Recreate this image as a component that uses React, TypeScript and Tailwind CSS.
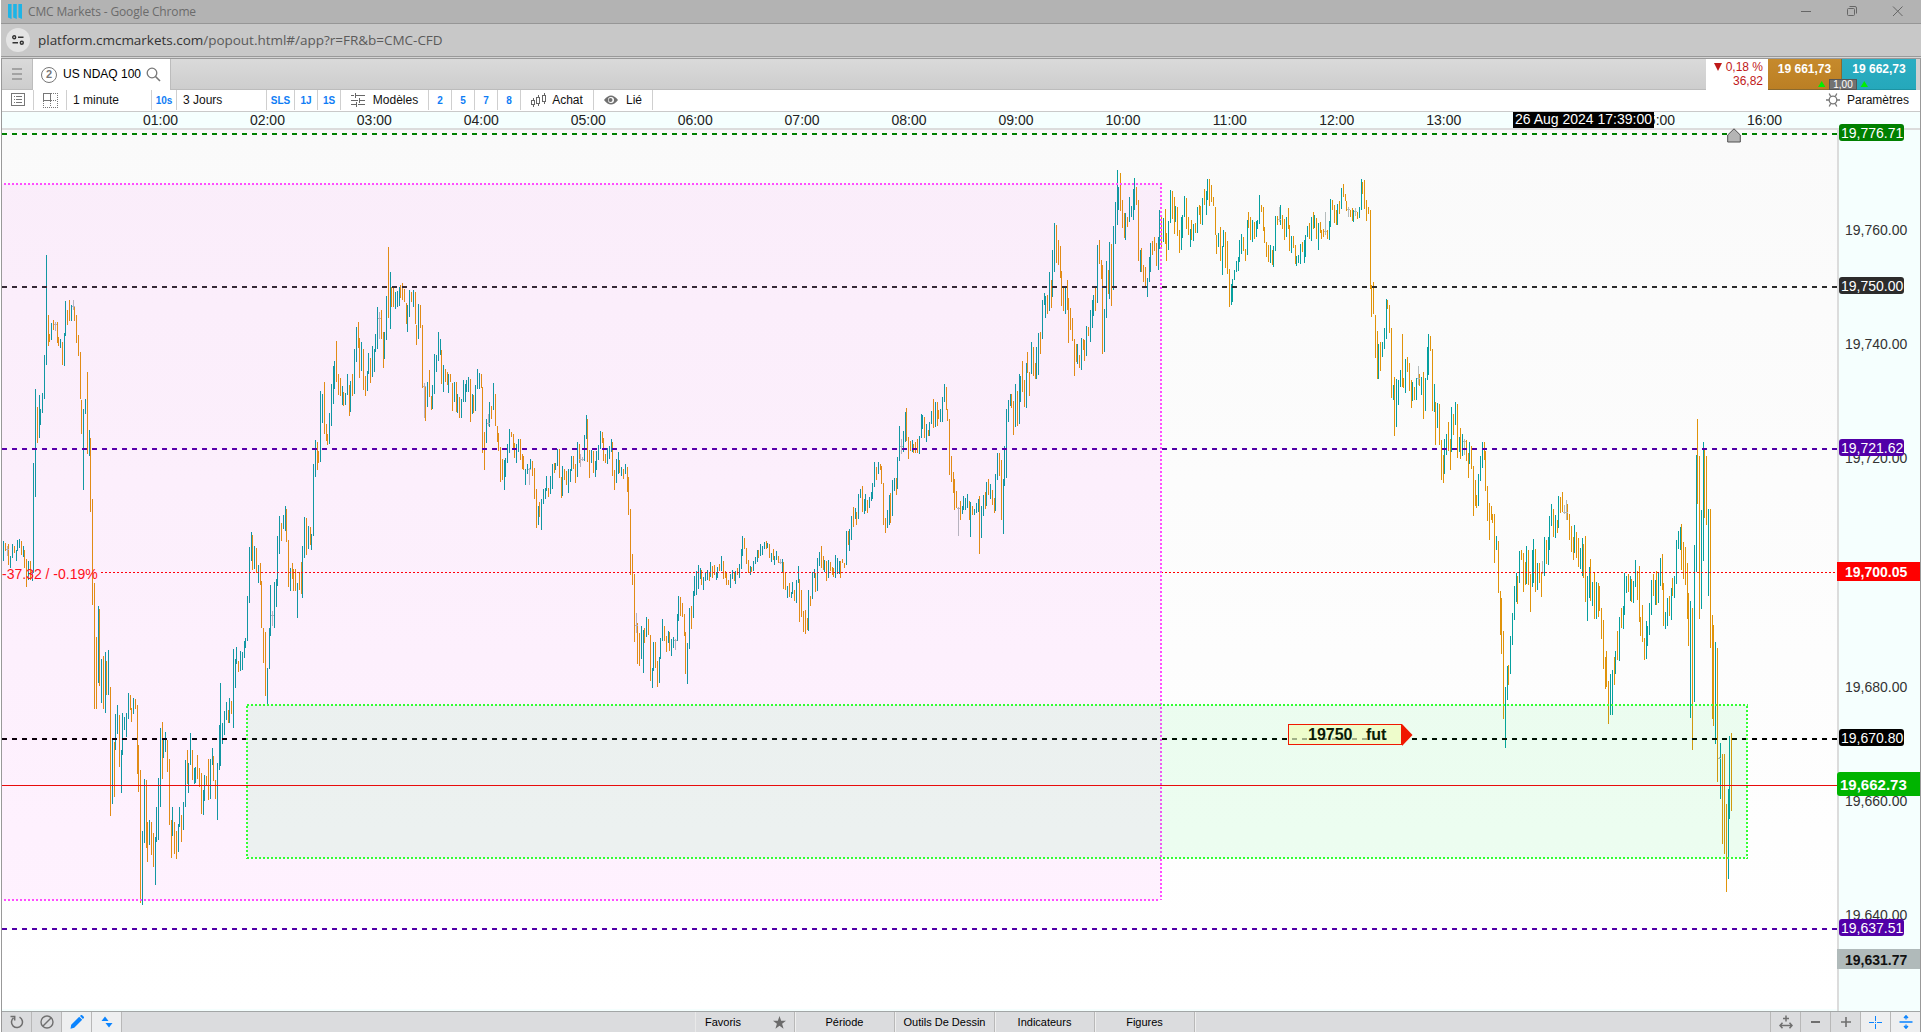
import React from "react";

/* Price bars. Every segment has an origin; bars are "colour x,top,bottom[,tick]"
   in thirds of a pixel relative to it (t = up, o = down, g = unchanged). */
type Segment = { x: number; y: number; bars: string };

const SEGMENTS: Segment[] = [
  {
    x: 0,
    y: 230,
    bars:
      "t10,933,993 o16,938,963 g22,948,978,958 o25,942,1005 t31,978,1014 t37,942,984 o43,948,969 t49,960,993 t52,930,963 t58,927,954 o64,933,975 t70,948,981 o73,960,1014 o79,987,1071 t85,993,1050 o91,993,1050 t97,1020,1053 t100,699,1029 t106,477,801 o112,531,639 t118,495,624 t121,537,585 t127,489,549 t133,375,507 t139,75,405 o145,255,348 o148,312,336 t154,279,330 o160,270,300 g166,276,303,283 o172,276,339 o175,321,348 t181,327,354 o187,336,405 t193,309,408 t196,213,318 o202,240,285 o208,210,273 t214,225,273 g220,210,240,228 o223,228,273 o229,255,339 o235,315,378 o241,366,507 o244,510,612 t250,537,780 t256,507,552 o262,426,672 t268,600,678 o271,624,846 o277,807,1125 " +
      "t838,858,972 o844,879,933 t850,855,897 t856,828,903 o859,837,936 o865,930,1071 t871,1014,1083 o877,999,1047 o880,1017,1083 o886,1017,1083 t892,1059,1164 o898,1026,1080 o904,996,1092 t907,948,1104 t913,861,984 o919,864,975 t925,888,957 o931,891,945 t934,912,960 t940,702,918 t946,630,741 o952,636,720 o955,663,699 t961,483,696 t967,492,579 o973,456,612 o979,582,633 o982,612,645 t988,549,642 t994,462,588 t1000,408,522 t1003,393,477 o1009,333,456 o1015,432,495 o1021,444,498 t1027,468,525 o1030,486,528 t1036,489,525 t1042,432,495 o1048,465,558 t1051,453,546 o1057,432,498 t1063,357,492 t1069,291,396 o1075,276,354 o1078,324,444 t1084,336,423 o1090,357,480 o1096,438,498 t1102,423,483 t1105,369,432 o1111,384,459 t1117,348,441 t1123,357,426 t1126,312,366 t1132,231,357 g1138,246,327,265 o1144,240,327 o1150,306,414 t1153,306,387 t1159,198,330 o1165,51,264 t1171,126,297 o1174,171,231 o1180,174,231 t1186,186,237 t1192,183,231 t1198,171,228 o1201,165,204 o1207,159,210 o1213,177,216 o1219,219,282 t1222,225,306 t1228,180,261 o1234,186,216 t1240,180,231 o1246,186,282 o1249,285,345 t1255,222,327 o1261,225,294 o1267,285,474 g1273,459,564,469 o1276,471,573 t1282,456,531 o1288,420,501 o1294,498,540 t1297,465,537 t1303,372,492 t1309,375,426 t1315,306,393 t1321,327,375 o1324,360,462 t1330,405,486 o1336,417,456 o1342,426,465 t1345,432,489 o1351,432,456 o1357,459,543 t1363,456,516 o1369,456,546 t1372,492,549 o1378,501,564 t1384,507,564 t1390,450,516 t1396,462,516 t1399,450,486 t1405,441,486 o1411,447,576 t1417,492,552 o1420,495,549 t1426,465,543 t1432,417,477 t1438,429,477",
  },
  {
    x: 0,
    y: 560,
    bars: "o283,69,447 o289,231,447 t295,138,369 o298,147,378 t304,297,429 o310,288,447 t316,276,459 o319,303,405 t325,270,405 o331,381,768 t337,540,732 o343,546,711 t346,462,570 t352,435,522 o358,465,621 t364,570,699 t367,459,585 t373,471,510 t379,459,531 t385,399,477 o391,405,450 o394,444,486 t400,414,462 o406,417,447 o412,435,642 o415,555,696 o421,630,1029 t427,813,1035 t433,657,849 o439,660,864 o442,786,906 t448,780,855 o454,786,885 o460,819,921 t466,831,975 t469,741,846 t475,654,840 t481,504,741 o487,486,657 t490,537,594 t496,516,576 o502,540,636 o508,597,795 o514,780,894 t517,741,828 o523,786,882 o529,813,897 t535,792,876 t538,741,801 o544,765,846 t550,726,810 t556,600,741 o562,570,672 t565,609,699 t571,519,615 o577,570,660 t583,624,672 t586,621,669 o592,585,657 o598,624,681 o604,639,762 t610,690,765 t613,645,723 o619,648,675 o625,597,720 t631,597,717 t637,564,615 o640,588,663 o646,660,717 t652,609,780 t658,495,630 t661,369,618 t667,489,552 t673,453,525 t679,426,480 o685,450,489 t688,414,489 o694,423,462 t700,267,504 t706,297,384 t709,261,312 o715,303,336 t721,273,333 t727,276,330 t733,243,294 t736,234,264 t742,108,243 t748,-39,129 t754,-84,3 o757,-75,30 t763,-42,27 o769,-36,39 t775,15,69 o781,9,75 o784,63,204 o790,204,309 o796,216,408 t802,324,435 t808,204,327 t811,75,228 g817,153,198,166 t823,66,204 t829,57,141 t832,-72,78",
  },
  {
    x: 480,
    y: 370,
    bars: "o4,12,54 o7,51,249 o13,186,300 t19,147,219 g25,132,168,160 t28,96,171 o34,108,147 t40,39,120 o46,72,168 o52,168,216 o55,189,243 o61,231,336 o67,267,330 t73,270,360 t76,264,321 t82,222,279 t88,177,249 o94,186,201 o100,192,240 o103,219,264 t109,222,279 t115,207,246 o121,207,270 o127,252,297 o130,258,300 t136,297,345 t142,282,312 g148,294,345,298 t151,267,300 o157,273,318 o163,294,387 o169,357,474 t175,408,465 o178,396,441 t184,387,480 t190,357,402 t196,354,387 t199,318,363 o205,354,381 t211,318,372 t217,282,357 o223,279,309 t226,279,300 t232,237,288 o238,237,324 o244,321,384 t247,288,378 o253,297,330 o259,303,345 t265,297,369 t271,297,336 t274,258,303 o280,258,297 o286,282,339 t292,216,321 o298,222,279 g301,252,291,267 g307,261,273,267 t313,195,273 t319,135,207 o322,147,276 o328,240,324 t334,240,279 o340,243,309 t346,273,321 t349,243,300 t355,225,270 t361,183,237 o367,186,219 o370,204,273 o376,252,279 t382,234,282 t388,228,267 t394,207,246 o397,216,318 o403,300,360 t409,267,339 t415,246,312 o418,270,309 t424,291,318 o430,297,327 t436,282,312 o442,291,366 o445,321,435 o451,417,615 o457,552,645 o463,612,816 g469,729,789,766 o472,759,882 o478,789,888 t484,768,867 t490,780,909 o493,774,819 t499,741,801 o505,747,795 o511,795,933 t517,894,954 t520,816,903 o526,816,894 o532,873,951 t538,861,939 t541,804,867 t547,747,813 o553,768,813 o559,798,846 t565,783,819 o568,786,843 t574,807,858 t580,801,834 g586,807,840,811 t592,732,813 t595,678,753 o601,681,738 o607,699,741 o613,732,798 o616,786,912 t622,819,942 t628,714,837 o634,708,777 t640,663,744 t643,618,678 t649,603,675 t655,585,657 t661,594,627 o664,600,645 t670,621,660 t676,606,633 t682,600,630 o688,606,633 t691,576,621 o697,588,624 o703,585,615 t709,606,630 t712,591,624 o718,582,603 t724,558,603 o730,573,627 o736,603,624 o739,609,645 o745,630,645 t751,612,654 t757,600,627 o763,609,633 t766,603,642 o772,594,615 t778,582,624 t784,537,597 t787,498,558 o793,504,537 o799,534,582 o805,570,609 t811,588,615 o814,591,606 t820,573,603 t826,561,582 t832,540,576 o835,540,564 t841,522,558 t847,528,555 t853,516,537 o859,513,537 t862,519,534 o868,522,564 t874,549,576 o880,537,570 t883,558,585 t889,543,570 o895,558,579 g901,567,582,577 t907,567,606 o910,576,657 o916,606,660 t922,648,684 o928,639,681 t934,666,684 t937,636,672 o943,660,693 t949,630,699 t955,588,639 o958,627,756 o964,660,741 o970,723,786 o976,720,792 o982,744,780 t985,660,783 o991,678,708 t997,606,687 t1003,597,624 o1006,609,666 t1012,564,663 t1018,546,588 o1024,528,594 o1030,558,600 t1033,570,606 o1039,573,633 t1045,570,624 o1051,576,603 o1057,591,615 o1060,594,621 t1066,555,624 t1072,564,612 t1078,573,612 o1081,573,624 o1087,567,579 o1093,579,594 t1099,483,585 o1105,483,525 t1108,477,543 t1114,438,510 o1120,411,471 t1126,414,447 o1129,426,465 t1135,372,447 t1141,357,384 o1147,348,426 t1153,387,432 t1156,372,423 o1162,390,429 t1168,381,414 t1174,366,393 t1177,339,387 t1183,276,351 o1189,291,330 t1195,276,312 o1201,282,300 o1204,288,342 o1210,339,465 o1216,444,489 t1222,420,474 t1228,375,465 o1231,369,459 t1237,330,438 t1243,324,363 o1249,324,375 t1252,261,357 t1258,168,273 g1264,207,252,230 t1270,183,246 t1276,126,216 o1279,114,213 o1285,201,267 o1291,213,243 t1297,210,246 o1300,222,249 o1306,216,249 o1312,207,249 t1318,198,252 t1324,132,204 t1327,135,177 o1333,141,204 t1339,162,216 o1345,180,198 t1348,156,198 t1354,123,162 o1360,87,174 t1366,96,171 o1372,96,168 o1375,120,147 t1381,117,156 t1387,81,156 t1393,42,96 o1399,51,120 o1402,117,153 o1408,147,315 o1414,258,336 o1420,306,369 o1423,327,420 o1429,363,414 g1435,411,498,415",
  },
  {
    x: 960,
    y: 150,
    bars: "o1,1053,1110 t7,1068,1092 t10,1038,1080 t16,1044,1080 t22,1032,1074 o28,1053,1110 t31,1056,1161 o37,1068,1095 t43,1077,1095 t49,1059,1089 t55,1047,1086 o58,1038,1212 t64,1068,1164 t70,1035,1098 o76,1026,1077 t79,996,1068 o85,987,1035 t91,1002,1047 o97,1020,1065 o103,1044,1089 t106,972,1083 t112,909,990 o118,909,978 o124,930,1110 t130,987,1152 t133,888,1008 t139,777,984 t145,750,816 t151,732,768 o154,732,774 o160,753,855 t166,702,831 o172,723,828 t178,672,822 t181,678,756 o187,633,726 o193,690,771 t199,639,774 o202,606,669 o208,666,738 t214,576,672 o220,591,678 o226,639,687 t229,591,687 t235,549,675 o241,546,612 t247,450,567 t253,429,465 t256,438,504 o262,435,492 t268,366,483 o274,390,474 t277,300,441 t283,219,366 o289,225,339 o295,270,345 o301,288,384 o304,363,468 o310,414,483 t316,414,492 o322,390,480 o325,444,579 o331,474,540 o337,504,573 o343,567,678 o349,582,636 t352,582,642 o358,615,654 t364,564,660 o370,567,600 o373,570,633 t379,528,618 o385,531,558 t391,480,576 t397,450,534 t400,435,498 o406,414,483 t412,285,459 o418,270,342 o424,330,387 o427,345,612 t433,477,606 t439,333,504 o445,360,432 t448,276,447 o454,282,468 t460,228,420 t466,156,282 t472,60,225 t475,111,180 o481,69,183 o487,150,234 o493,189,264 t496,189,270 o502,201,231 t508,141,216 t514,168,201 t520,117,210 t523,84,180 o529,111,165 o535,150,333 t541,300,366 o544,294,366 o550,345,396 o556,351,411 t562,384,441 t568,321,396 t571,279,366 o577,273,315 o583,261,303 o589,279,348 t595,261,360 t598,180,297 o604,195,294 t610,204,276 o616,177,282 o619,249,333 t625,213,300 t631,120,219 o637,123,207 o643,141,252 t646,168,216 o652,171,258 o658,240,309 t664,201,300 t667,195,264 t673,138,201 o679,144,237 o685,201,255 t691,237,291 o694,210,270 t700,222,273 o706,219,249 t712,171,249 o718,165,195 o721,168,222 t727,144,225 o733,117,165 t739,123,195 t742,87,150 o748,87,168 o754,105,156 o760,141,168 o766,171,255 o769,255,312 t775,249,291 o781,231,333 t787,288,375 t790,240,291 o796,246,354 o802,273,372 o808,357,471 t814,402,465 t817,387,456 t823,360,390 t829,333,366 t835,321,363 t838,270,336 t844,252,312 o850,261,303 o856,297,333 t862,210,315 o865,186,234 o871,201,270 t877,210,276 o883,216,267 t889,213,261 t892,210,237 t898,135,222 o904,165,186 o910,171,243 o913,231,279 o919,276,321 o925,285,336 t931,285,339 o937,300,345 t940,288,351 t946,198,303 o952,198,225 g958,171,216,208 t961,165,225 o967,195,237 o973,207,270 t979,201,261 o985,174,237 o988,225,303 t994,258,309 o1000,258,294 o1006,285,342 t1009,318,348 t1015,315,339 t1021,282,342 o1027,276,306 t1033,270,339 t1036,255,321 t1042,228,261 o1048,219,267 t1054,201,273 o1060,186,237 t1063,195,234 o1069,204,267 t1075,219,300 o1081,216,249 o1084,240,267 o1090,237,261 g1096,186,255,244 o1102,240,267 t1108,213,270 t1111,147,231 o1117,150,180 o1123,165,219 o1129,180,225 t1132,162,225 o1138,153,192 t1144,114,177 o1150,102,141 o1156,132,153 o1159,153,183 g1165,171,201,178 o1171,180,201 o1177,174,213 t1180,180,216 g1186,174,198,184 o1192,186,207 t1198,171,204 t1204,87,180 o1207,96,132 o1213,90,177 o1219,150,213 o1225,171,192 o1231,180,417 o1234,405,501 o1240,396,492 o1246,495,624 o1252,543,687 t1255,582,687 o1261,576,663 t1267,576,621 t1273,534,597 t1279,447,567 o1282,450,477 o1288,465,549 o1294,534,744 t1300,705,750 o1303,681,858 t1309,687,831 t1315,690,765 t1321,660,711 o1327,552,711 o1330,684,714 t1336,627,729 o1342,621,666 o1348,639,723 o1354,690,774 t1357,696,753 o1363,711,750 t1369,684,750 g1375,648,705,685 o1378,672,708 t1384,681,735 o1390,666,807 t1396,684,783 t1402,591,690 t1405,552,675 o1411,558,603 o1417,597,783 t1423,702,786 o1426,756,885 t1432,759,834 o1438,762,885",
  },
  {
    x: 1400,
    y: 400,
    bars: "o124,120,240 o130,165,249 t133,117,222 t139,102,165 o145,66,153 o151,117,210 t154,21,156 o160,42,105 t166,6,75 o172,12,174 t178,111,156 o181,84,177 t187,102,168 g193,117,165,124 o199,120,183 o205,159,234 t208,126,192 o214,138,207 o220,198,348 o226,240,318 o229,285,324 t235,222,318 t241,168,243 t247,126,204 o253,126,180 o256,153,273 o262,258,363 o268,309,420 o274,318,360 o277,342,369 o283,342,489 t289,408,450 o295,423,579 o301,573,705 o304,594,762 o310,693,957 t316,861,1044 t322,798,900 o325,795,855 t331,708,822 t337,639,735 t343,558,660 t349,519,606 o352,528,612 t358,453,549 o364,450,480 o370,459,576 o376,486,555 t379,438,552 o385,450,555 o391,522,636 t397,450,561 t400,417,549 o406,447,576 t412,489,570 o418,489,549 o424,516,591 g427,483,522,517 t433,411,528 o439,420,492 t445,411,495 t448,348,450 t454,312,378 o460,327,411 t466,345,414 o472,360,399 t475,288,384 o481,291,339 o487,276,336 g493,315,342,338 g499,300,360,338 o502,312,360 o508,342,420 o514,378,456 o520,411,480 t523,375,459 o529,396,474 o535,414,501 t541,444,507 t547,414,528 o550,432,534 o556,408,606 t562,528,663 t568,501,594 o571,477,603 t577,546,618 o583,519,657 t589,546,657 o595,549,651 o598,558,633 o604,624,717 o610,660,807 o616,771,867 o619,753,861 o625,843,972 t631,822,945 t637,810,945 o643,771,855 t646,753,822 o652,693,780 t658,651,783 o664,624,684 t670,618,687 t673,519,645 t679,528,579 o685,522,576 t691,528,603 o694,537,606 t700,543,609 t706,480,561 o712,513,600 o718,498,666 o721,651,708 o727,615,726 o733,714,780 t739,663,777 t742,678,738 t748,609,705 t754,540,645 o760,522,588 t766,540,615 o769,513,615 t775,516,609 t781,474,558 o787,462,570 o790,549,678 t796,636,687 t802,594,678 o808,588,648 t814,564,660 o817,534,588 t823,528,594 t829,420,552 t835,393,447 t841,381,450 o844,372,510 o850,426,537 o856,441,555 o862,489,657 o865,579,738 t871,603,954 o877,624,1050 t883,435,906 t889,165,516 o892,57,312 o898,168,657 t904,330,627 t910,126,483 o913,150,354 o919,168,375 t925,327,588 o931,327,744 o937,645,957 o940,675,978 t946,726,1032 o952,744,1146 t961,1029,1197 g958,1072,1076,1074 o967,1062,1332 o973,1062,1362 o979,1212,1476 t985,1167,1437 t988,1008,1257 o994,999,1233",
  },
];

const BAR_COLORS: Record<string, string> = { t: "#06a09f", o: "#e0930a", g: "#b4bcbc" };

function barPath(kind: string): string {
  const out: string[] = [];
  for (const seg of SEGMENTS) {
    for (const token of seg.bars.split(" ")) {
      if (token[0] !== kind) continue;
      const [bx, top, bottom, tick] = token.slice(1).split(",").map(Number);
      const x = seg.x + Math.floor(bx / 3);
      const y = seg.y + Math.round(top / 3);
      const h = Math.max(1, Math.round((bottom - top) / 3));
      out.push(`M${x} ${y}h1v${h}h-1z`);
      if (tick !== undefined) {
        out.push(`M${x - 1} ${seg.y + Math.floor(tick / 3)}h3v1h-3z`);
      }
    }
  }
  return out.join("");
}

const LEVELS = [
  { y: 134, color: "#008000" },
  { y: 287, color: "#2c2c2c" },
  { y: 449, color: "#5100a8" },
  { y: 739, color: "#000000" },
  { y: 929, color: "#5100a8" },
];

function Chart() {
  return (
    <svg
      className="block h-[881px] w-[1835px] shrink-0"
      viewBox="2 130 1835 881"
      shapeRendering="crispEdges"
      fontFamily="'Liberation Sans', Arial, sans-serif"
    >
      <defs>
        <linearGradient id="plot" x1="0" y1="0" x2="0" y2="1">
          <stop offset="0" stopColor="#fafafa" />
          <stop offset="1" stopColor="#ffffff" />
        </linearGradient>
      </defs>
      <rect x="2" y="130" width="1835" height="879" fill="url(#plot)" />
      <rect x="2" y="1009" width="1835" height="2" fill="#f5fffe" />
      {["t", "o", "g"].map((k) => (
        <path key={k} d={barPath(k)} fill={BAR_COLORS[k]} />
      ))}
      {LEVELS.map((l) => (
        <line key={l.y} x1="2" x2="1837" y1={l.y} y2={l.y} stroke={l.color} strokeWidth="2" strokeDasharray="5 5" />
      ))}
      <line x1="101" x2="1837" y1="572.5" y2="572.5" stroke="#ff0000" strokeDasharray="2 2" />
      <rect x="2" y="184" width="1159" height="716" fill="#ff00ff" fillOpacity="0.05" />
      <path d="M4 184H1162M1161 187V900M4 900H1160" fill="none" stroke="#ff4dff" strokeWidth="2" strokeDasharray="2 2" />
      <rect x="247" y="705" width="1500" height="153" fill="#00f03c" fillOpacity="0.07" />
      <path
        d="M247 705H1748M1747 706V859M247 858H1748M247 706V859"
        fill="none"
        stroke="#32ff32"
        strokeWidth="2"
        strokeDasharray="2 2"
      />
      <line x1="2" x2="1837" y1="785.5" y2="785.5" stroke="#e80c0c" />
      <rect x="1288.5" y="724.5" width="113" height="20" fill="#eefccb" stroke="#f01800" />
      <path
        d="M1292 738h5v2h-5zm10 0h5v2h-5zm10 0h5v2h-5zm10 0h5v2h-5zm10 0h5v2h-5zm10 0h5v2h-5zm10 0h5v2h-5zm10 0h5v2h-5zm10 0h5v2h-5zm10 0h5v2h-5z"
        fill="#9fae86"
      />
      <path d="M1402 724L1412.5 735L1402 746Z" fill="#f01800" shapeRendering="auto" />
      <text x="1308" y="740" fontSize="16" fontWeight="700" fill="#0a1a06">
        19750
      </text>
      <text x="1366" y="740" fontSize="16" fontWeight="700" fill="#0a1a06">
        fut
      </text>
      <text x="2" y="579" fontSize="14" fill="#ff1020">
        -37.32 / -0.19%
      </text>
    </svg>
  );
}

const HOURS = ["01", "02", "03", "04", "05", "06", "07", "08", "09", "10", "11", "12", "13", "14", "15", "16"];
const PRICES = ["19,760.00", "19,740.00", "19,720.00", "19,700.00", "19,680.00", "19,660.00", "19,640.00"];

function TitleBar() {
  return (
    <div className="flex h-6 items-center border-b border-[#969696] bg-[#b3b3b3] pl-[7px] font-['Open_Sans',sans-serif]">
      <svg className="mr-[6px] h-[15px] w-[14px]" viewBox="0 0 14 15" fill="#1eb4e6">
        <path d="M0 0h3.6v15L0 13.6zM5.2 0h3.6v15l-3.6-1.4zM10.4 0H14v15l-3.6-1.4z" />
      </svg>
      <span className="text-[12px] tracking-[-0.15px] text-[#6b6b6b]">CMC Markets - Google Chrome</span>
      <svg className="ml-auto h-6 w-[130px]" viewBox="1791 0 130 24" fill="none" stroke="#666" strokeWidth="1">
        <path d="M1801 11.5h10" />
        <rect x="1847.5" y="8.5" width="7" height="7" rx="1" />
        <path d="M1849.5 6.5h5.500q1.500 0 1.500 1.500v5.500" />
        <path d="M1893 6.5l9.500 9.500M1902.5 6.5l-9.500 9.500" />
      </svg>
    </div>
  );
}

function AddressBar() {
  return (
    <div className="flex h-8 items-center bg-[#c8c8c8] pl-[5px] font-['Open_Sans',sans-serif]">
      <div className="flex size-6 items-center justify-center rounded-full bg-[#e4e4e4]">
        <svg className="h-[10px] w-[12px]" viewBox="0 0 12 10" fill="none" stroke="#333" strokeWidth="1.4">
          <circle cx="2.2" cy="2.2" r="1.5" />
          <path d="M6 2.2h5.5M0.5 7.8h5.5" />
          <circle cx="9.8" cy="7.8" r="1.5" />
        </svg>
      </div>
      <span className="ml-[8px] text-[13.5px] tracking-[-0.02px] text-[#5a5a5a]">
        <span className="text-[#333]">platform.cmcmarkets.com</span>/popout.html#/app?r=FR&amp;b=CMC-CFD
      </span>
    </div>
  );
}

function TabRow() {
  return (
    <div className="flex h-[31px] bg-gradient-to-b from-[#dadada] to-[#cdcdcd]">
      <div className="flex w-[31px] flex-col items-center justify-center gap-[3px] border-r border-b border-[#bdbdbd]">
        <span className="h-[2px] w-[10px] bg-[#a3a3a3]" />
        <span className="h-[2px] w-[10px] bg-[#a3a3a3]" />
        <span className="h-[2px] w-[10px] bg-[#a3a3a3]" />
      </div>
      <div className="flex w-[137px] items-center bg-white pl-[8px]">
        <span className="flex size-4 items-center justify-center rounded-full border border-[#777] text-[11px] font-bold leading-none text-[#777]">
          2
        </span>
        <span className="ml-[6px] text-[12px] leading-[29px] whitespace-nowrap text-black">US NDAQ 100</span>
        <svg className="ml-[5px] size-[15px]" viewBox="0 0 15 15" fill="none" stroke="#777" strokeWidth="1.3">
          <circle cx="6" cy="6" r="4.8" />
          <path d="M9.5 9.5l4.5 4.5" strokeWidth="1.6" />
        </svg>
      </div>
      <div className="flex-1 border-b border-l border-[#bcbcbc]" />
      <div className="flex w-[62px] flex-col items-end bg-white pt-[1px] pr-[5px] text-[12px] leading-[14px] text-[#bf1a1a]">
        <span className="flex items-center">
          <svg className="mr-[4px] size-2" viewBox="0 0 8 8" fill="#bf1a1a">
            <path d="M0 0h8L4 8z" />
          </svg>
          0,18 %
        </span>
        <span>36,82</span>
      </div>
      <div className="relative flex w-[148px] text-center text-[12px] font-bold leading-[21px] text-white">
        <div className="w-[74px] border-r border-b border-[#8a6a30] bg-gradient-to-b from-[#c68a2c] to-[#bb7f24]">
          19 661,73
        </div>
        <div className="w-[74px] border-b border-[#1d93a3] bg-gradient-to-b from-[#2badc2] to-[#25a8bb]">
          19 662,73
        </div>
        <svg className="absolute top-[22px] left-[50px] h-[6px] w-[50px]" viewBox="0 0 50 6" fill="#00f000">
          <path d="M0 6l3.7-6 3.7 6zM42.6 6l3.7-6 3.7 6z" />
        </svg>
        <span className="absolute top-[20px] left-[61px] h-[11px] w-[28px] border border-[#555] bg-[#727272] text-[10px] font-normal leading-[10px]">
          1,00
        </span>
      </div>
      <div className="w-[4px] bg-[#d0d0d0]" />
    </div>
  );
}

const CELL = "flex h-full items-center justify-center border-r border-[#cfcfcf]";
const QUICK = "text-[10px] font-bold text-[#0f7df5]";

function Toolbar() {
  return (
    <div className="flex h-[22px] items-center border-b border-[#c9c9c9] bg-white pb-px text-[12px] whitespace-nowrap text-[#111]">
      <div className={`${CELL} w-[32px]`}>
        <svg className="size-[14px]" viewBox="0 0 14 14" fill="none" stroke="#777" shapeRendering="crispEdges">
          <path d="M0.5 0.5h13v12h-13zM3 3.5h1M3 6.5h1M3 9.5h1M5 3.5h6M5 6.5h6M5 9.5h6" />
        </svg>
      </div>
      <div className={`${CELL} w-[33px]`}>
        <svg className="h-[15px] w-[15px]" viewBox="0 0 15 15" fill="none" stroke="#777" shapeRendering="crispEdges">
          <path d="M0.5 0.5h7v7h-7z" />
          <path d="M8 0.5h6.5V14.5H0.5V8M7.5 8v6M8 7.5h6" strokeDasharray="1 1" />
        </svg>
      </div>
      <div className={`${CELL} w-[85px] !justify-start pl-[6px]`}>1 minute</div>
      <div className={`${CELL} ${QUICK} w-[25px]`}>10s</div>
      <div className={`${CELL} w-[90px] !justify-start pl-[6px]`}>3 Jours</div>
      <div className={`${CELL} ${QUICK} w-[28px]`}>SLS</div>
      <div className={`${CELL} ${QUICK} w-[23px]`}>1J</div>
      <div className={`${CELL} ${QUICK} w-[23px]`}>1S</div>
      <div className={`${CELL} w-[88px]`}>
        <svg className="mr-[8px] h-[14px] w-[14px]" viewBox="0 0 14 14" fill="none" stroke="#666" shapeRendering="crispEdges">
          <path d="M0 2.5h3M5 2.5h9M0 7.5h7M9 7.5h5M0 11.5h5M7 11.5h7M4.5 0v5M8.5 5v5M5.5 9v5" />
        </svg>
        Modèles
      </div>
      <div className={`${CELL} ${QUICK} w-[23px]`}>2</div>
      <div className={`${CELL} ${QUICK} w-[23px]`}>5</div>
      <div className={`${CELL} ${QUICK} w-[23px]`}>7</div>
      <div className={`${CELL} ${QUICK} w-[23px]`}>8</div>
      <div className={`${CELL} w-[73px]`}>
        <svg className="mr-[5px] h-[14px] w-[16px]" viewBox="0 0 16 14" fill="none" stroke="#666" shapeRendering="crispEdges">
          <path d="M0.5 7.5h3v4h-3zM2 5v2M2 12v2M5.5 4.5h3v6h-3zM7 2v2M7 11v2M11.5 2.5h3v6h-3zM13 0v2M13 9v2" />
        </svg>
        Achat
      </div>
      <div className={`${CELL} w-[59px]`}>
        <svg className="mr-[8px] h-[10px] w-[14px]" viewBox="0 0 14 10">
          <path d="M0 5Q7-4 14 5Q7 14 0 5z" fill="#707070" />
          <circle cx="7" cy="5" r="3" fill="#fff" />
          <circle cx="6.5" cy="5" r="2" fill="#707070" />
        </svg>
        Lié
      </div>
      <svg className="ml-auto size-[14px]" viewBox="0 0 14 14" fill="none" stroke="#777" strokeWidth="1.3">
        <circle cx="7" cy="7" r="3.8" />
        <path d="M0 7h3M11 7h3M3.2 0.5l1.5 3M10.8 0.5l-1.5 3M3.2 13.5l1.5-3M10.8 13.5l-1.5-3" />
      </svg>
      <span className="mr-[11px] ml-[7px]">Paramètres</span>
    </div>
  );
}

function TimeAxis() {
  return (
    <div className="relative flex h-[18px] border-b-2 border-[#dcdcdc] bg-[#f5fffe] pl-[105px] text-[14px] leading-4 text-[#222]">
      {HOURS.map((h) => (
        <span key={h} className="w-[106.95px] shrink-0 text-center">
          {h}:00
        </span>
      ))}
      <span className="absolute top-0 left-[1511px] h-4 w-[141px] bg-black text-center text-[14px] leading-[15px] whitespace-nowrap text-white">
        26 Aug 2024 17:39:00
      </span>
      <svg className="absolute top-[16px] left-[1725px] z-10 h-[15px] w-[14px]" viewBox="0 0 14 15">
        <path d="M0.7 14V7L7 0.8L13.3 7V14z" fill="#b5b5b5" stroke="#505050" />
      </svg>
    </div>
  );
}

const TAG = "absolute left-0 z-10 h-[17px] w-[65px] rounded-[3px] pl-[2px] text-[14px] leading-[18px] text-white";

function PriceAxis() {
  return (
    <div className="relative w-[83px] border-l-2 border-[#dcdcdc] bg-[#f5fffe] text-[14px] text-[#333]">
      <div className="flex flex-col pt-[43px]">
        {PRICES.map((p) => (
          <span key={p} className="h-[114.15px] pl-[6px] leading-[114px]">
            {p}
          </span>
        ))}
      </div>
      <span className={`${TAG} top-[-6px] bg-[#008000] !leading-[19px]`}>19,776.71</span>
      <span className={`${TAG} top-[147px] bg-[#2c2c2c]`}>19,750.00</span>
      <span className={`${TAG} top-[309px] bg-[#5100a8] !leading-[19px]`}>19,721.62</span>
      <span className={`${TAG} top-[599px] bg-black !leading-[19px]`}>19,670.80</span>
      <span className={`${TAG} top-[789px] bg-[#5100a8] !leading-[19px]`}>19,637.51</span>
      <span className="absolute top-[432px] -left-[2px] h-[19px] w-[83px] bg-[#ff0000] pl-[8px] font-bold leading-[20px] text-white">
        19,700.05
      </span>
      <span className="absolute top-[642px] -left-[2px] h-[24px] w-[83px] rounded-l-[3px] bg-[#00b400] pl-[3px] text-[15px] font-bold leading-[25px] text-white">
        19,662.73
      </span>
      <span className="absolute top-[819px] -left-[2px] h-[20px] w-[83px] bg-[#b0baba] pl-[8px] font-bold leading-[22px] text-[#111]">
        19,631.77
      </span>
    </div>
  );
}

const BTN = "flex h-full w-[30px] items-center justify-center border-r border-[#b8b8b8]";
const MENU =
  "flex h-full w-[100px] items-center justify-center border-r border-[#b8b8b8] shadow-[1px_0_0_#efefef]";

function BottomBar() {
  return (
    <div className="flex h-[21px] border-t border-[#a2a6a6] bg-[#dbdcde] text-[11px] text-black">
      <div className={`${BTN} pl-px`}>
        <svg className="size-[14px]" viewBox="0 0 14 14" fill="none" stroke="#6f6f6f" strokeWidth="1.5">
          <path d="M3.5 2.8A5.5 5.5 0 1 0 9.5 2.2M0.5 1.5h4.2v4" />
        </svg>
      </div>
      <div className={`${BTN} pl-px`}>
        <svg className="size-[14px]" viewBox="0 0 14 14" fill="none" stroke="#6f6f6f" strokeWidth="1.4">
          <circle cx="7" cy="7" r="6" />
          <path d="M3 11L11 3" />
        </svg>
      </div>
      <div className={`${BTN} bg-[#eeeff0] pl-px`}>
        <svg className="size-[14px]" viewBox="0 0 14 14" fill="#0a84ff">
          <path d="M9.2 1.8l3 3L4.2 12.8 0.5 13.7 1.2 9.8zM10 1l1-1q.6-.3 1.2.2l1.6 1.6q.5.6.1 1.2l-1 1z" />
        </svg>
      </div>
      <div className={`${BTN} bg-[#eeeff0] pl-px`}>
        <svg className="h-[12px] w-[12px]" viewBox="0 0 12 12" fill="#0a84ff">
          <path d="M0.5 5L4 0.500 7.500 5zM4.500 7h7L8 11.500z" />
        </svg>
      </div>
      <div className="w-[574px] border-r border-[#e9e9e9]" />
      <div className={`${MENU} !w-[99px] !justify-between pr-[8px] pl-[9px]`}>
        Favoris
        <svg className="size-[13px]" viewBox="0 0 24 24" fill="#6b6b6b">
          <path d="M12 0l3 8.700h9l-7.200 5.500 2.700 9.300L12 18l-7.500 5.500 2.700-9.300L0 8.700h9z" />
        </svg>
      </div>
      <div className={MENU}>Période</div>
      <div className={`${MENU} whitespace-nowrap`}>Outils De Dessin</div>
      <div className={MENU}>Indicateurs</div>
      <div className={MENU}>Figures</div>
      <div className="flex-1 border-r border-[#b8b8b8]" />
      <div className={BTN}>
        <svg className="h-[14px] w-[14px]" viewBox="0 0 14 14" fill="none" stroke="#6f6f6f" strokeWidth="1.5">
          <path d="M7 0.5v6M4 3.5h6M1 10.5h12M3.5 7.8L1 10.5l2.500 2.700M10.5 7.8L13 10.5l-2.500 2.700" />
        </svg>
      </div>
      <div className={BTN}>
        <span className="h-[2px] w-[9px] bg-[#6f6f6f]" />
      </div>
      <div className={BTN}>
        <svg className="size-[10px]" viewBox="0 0 10 10" stroke="#6f6f6f" strokeWidth="1.6">
          <path d="M5 0v10M0 5h10" />
        </svg>
      </div>
      <div className={`${BTN} bg-[#eeeff0]`}>
        <svg className="size-[13px]" viewBox="0 0 13 13" stroke="#0a84ff" shapeRendering="crispEdges">
          <path d="M6.5 0v5M6.5 8v5M0 6.5h5M8 6.5h5M6 6.5h1" />
        </svg>
      </div>
      <div className="flex h-full w-[29px] items-center justify-center bg-[#eeeff0]">
        <svg className="size-[14px]" viewBox="0 0 14 14" fill="none" stroke="#0a84ff" strokeWidth="1.3">
          <path d="M0.5 7h13M7 1v3.500M7 9.500v3.500M5 3l2-2.300L9 3M5 11l2 2.300L9 11" />
        </svg>
      </div>
    </div>
  );
}

export default function App() {
  return (
    <div className="h-[1033px] w-[1921px] overflow-hidden bg-white pl-px font-['Liberation_Sans',Arial,sans-serif]">
      <TitleBar />
      <AddressBar />
      <div className="h-[3px] border-y border-[#999] bg-[#d4d4d4]" />
      <div className="border-x border-[#999]">
        <TabRow />
        <Toolbar />
        <TimeAxis />
        <div className="flex h-[881px]">
          <Chart />
          <PriceAxis />
        </div>
        <BottomBar />
      </div>
    </div>
  );
}
